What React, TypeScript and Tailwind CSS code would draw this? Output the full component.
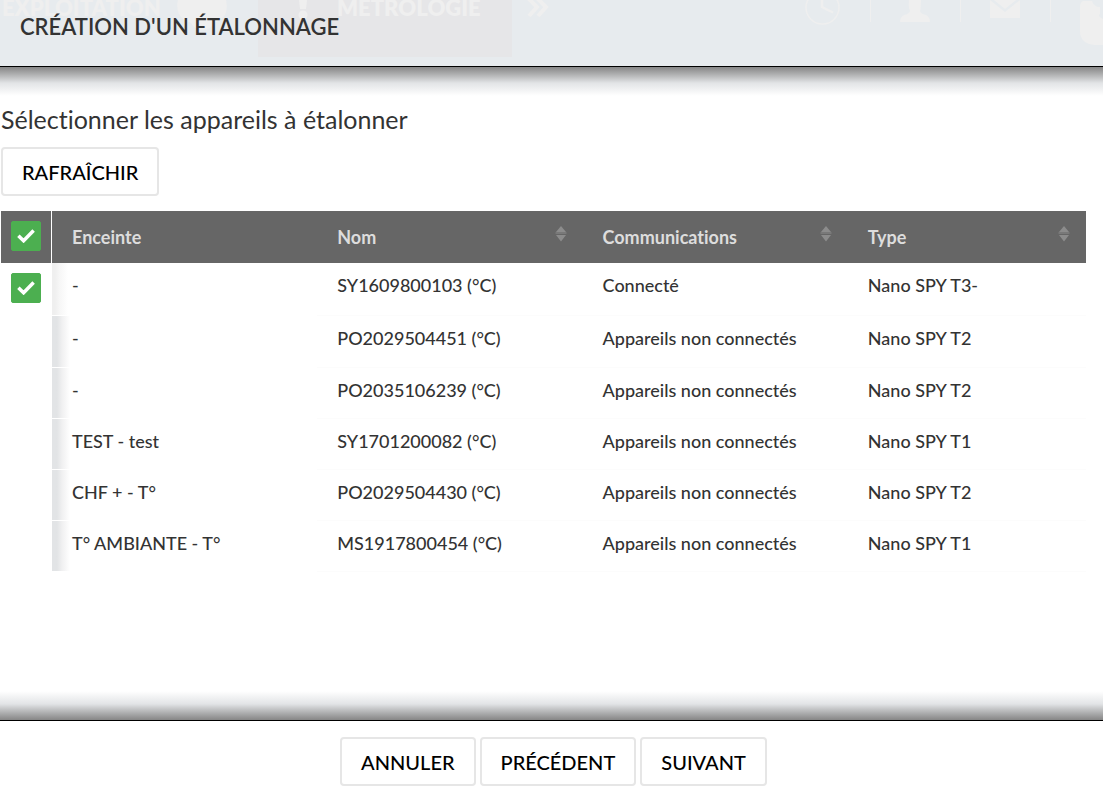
import React, { useState } from 'react';

interface Device {
  id: number;
  enclosure: string;
  name: string;
  status: string;
  type: string;
  connected: boolean;
}

const OFFLINE = 'Appareils non connectés';

const devices: Device[] = [
  { id: 1, enclosure: '-', name: 'SY1609800103 (°C)', status: 'Connecté', type: 'Nano SPY T3-', connected: true },
  { id: 2, enclosure: '-', name: 'PO2029504451 (°C)', status: OFFLINE, type: 'Nano SPY T2', connected: false },
  { id: 3, enclosure: '-', name: 'PO2035106239 (°C)', status: OFFLINE, type: 'Nano SPY T2', connected: false },
  { id: 4, enclosure: 'TEST - test', name: 'SY1701200082 (°C)', status: OFFLINE, type: 'Nano SPY T1', connected: false },
  { id: 5, enclosure: 'CHF + - T°', name: 'PO2029504430 (°C)', status: OFFLINE, type: 'Nano SPY T2', connected: false },
  { id: 6, enclosure: 'T° AMBIANTE - T°', name: 'MS1917800454 (°C)', status: OFFLINE, type: 'Nano SPY T1', connected: false },
];

interface CheckProps {
  label: string;
  checked: boolean;
  onChange: (checked: boolean) => void;
}

const Check: React.FC<CheckProps> = ({ label, checked, onChange }) => (
  <div className="mx-auto grid size-[30px] place-items-center">
    <input
      type="checkbox"
      aria-label={label}
      checked={checked}
      onChange={(e) => onChange(e.target.checked)}
      className="col-start-1 row-start-1 size-[30px] cursor-pointer appearance-none rounded-[2px] border border-[#4caf50] bg-white checked:bg-[#4caf50]"
    />
    {checked && (
      <svg viewBox="0 0 18 14" className="pointer-events-none col-start-1 row-start-1 h-[14px] w-[18px]" fill="none">
        <path d="M1.4 6.8 L6.6 11.8 L16.6 1.6" stroke="#fff" strokeWidth="3.5" />
      </svg>
    )}
  </div>
);

const Button: React.FC<{ children: React.ReactNode }> = ({ children }) => (
  <button
    type="button"
    className="h-[49px] rounded border-2 border-[#e6e6e6] bg-white px-[19px] text-xl font-medium text-black uppercase hover:bg-gray-50"
  >
    {children}
  </button>
);

const HeadCell: React.FC<{ title: string; sortable?: boolean }> = ({ title, sortable }) => (
  <th scope="col" className="h-[52px] pr-4 pl-5 text-left font-bold">
    <div className="flex items-center justify-between">
      {title}
      {sortable && (
        <button type="button" aria-label={`Trier par ${title}`} className="pb-1.5">
          <svg viewBox="0 0 12 16" className="h-4 w-3" fill="#8c8c8c">
            <path d="M6 0 L11 6 H1 Z M0.5 6.5 H11.5 V7.5 H0.5 Z M1 9 H11 L6 15.5 Z" />
          </svg>
        </button>
      )}
    </div>
  </th>
);

// Faded main menu showing through the dialog header
const MenuBackdrop = () => (
  <div aria-hidden="true" className="absolute inset-0 overflow-hidden text-[#efefef]">
    <div className="absolute top-0 left-[258px] h-[57px] w-[254px] bg-[#e6e6e8]" />
    <span className="absolute -top-2 left-[2px] text-[22px] leading-8 font-extrabold">EXPLOITATION</span>
    <svg className="absolute top-0 left-[177px]" width="50" height="32" fill="currentColor">
      <path d="M1 0 H49 Q51 8 48 15 Q44 20 37 23 A13 13 0 0 1 14 23 Q5 20 2 14 Q-1 7 1 0 Z" />
    </svg>
    <svg className="absolute top-0 left-[298px]" width="10" height="21" fill="currentColor">
      <path d="M1 0 H9 L8 9 H2 Z" />
      <circle cx="5" cy="15" r="4.5" />
    </svg>
    <span className="absolute -top-2 left-[337px] text-[22px] leading-8 font-extrabold">MÉTROLOGIE</span>
    <svg className="absolute top-0 left-[527px]" width="22" height="18" fill="none" stroke="currentColor" strokeWidth="4">
      <path d="M1 -2 L10 7 L2 16 M10 -2 L19 7 L11 16" />
    </svg>
    <svg className="absolute top-0 right-0" width="303" height="50" fill="currentColor">
      <circle cx="22.5" cy="7.5" r="16.5" fill="none" stroke="currentColor" strokeWidth="1.5" />
      <path d="M22 -3 V7 L33 12.5" fill="none" stroke="currentColor" strokeWidth="2.5" />
      <path d="M70 0 H71 V22 H70 Z M160 0 H161 V22 H160 Z M250 0 H251 V22 H250 Z" />
      <path d="M109 0 H121 Q121 8 120 11 Q121 14 126 15 Q130 17 130 22 H100 Q100 17 104 15 Q109 14 110 11 Q108 7 109 0 Z" />
      <path d="M190 0 L205 12 L220 0 V18 H190 Z" />
      <path d="M194 0 L205 9 L216 0 Z" />
      <path d="M283 1 H292 Q294 7 300 7 V14 Q297 16 303 19 V45 H295 Q280 44 280 31 V7 Q280 2 283 1 Z" />
    </svg>
  </div>
);

const App = () => {
  const [selected, setSelected] = useState<number[]>([1]);

  const selectable = devices.filter(d => d.connected);
  const allSelected = selectable.every(d => selected.includes(d.id));

  const toggle = (id: number, checked: boolean) => {
    setSelected(prev => (checked ? [...prev, id] : prev.filter(s => s !== id)));
  };

  return (
    <div className="flex min-h-screen flex-col bg-white font-[Lato,sans-serif] text-[#333] [font-variant-ligatures:none]">
      <header className="relative h-[67px] border-b border-black bg-[#e7ebee] px-5 pt-3">
        <MenuBackdrop />
        <h1 className="relative text-[22px] leading-[30px] font-semibold uppercase">Création d'un étalonnage</h1>
      </header>
      <div className="h-8 bg-linear-to-b from-[#868686] via-[#e2e4e6] via-50% to-white to-90%" />

      <main className="flex-1 pt-[3px] pr-[17px] pb-2 pl-px">
        <h2 className="mb-[11px] text-[25px] leading-[34px]">Sélectionner les appareils à étalonner</h2>
        <Button>Rafraîchir</Button>

        <table className="mt-[15px] w-full table-fixed border-separate border-spacing-0 text-lg leading-6 font-medium">
          <colgroup>
            <col className="w-[51px]" />
            <col className="w-[24.45%]" />
            <col className="w-[24.45%]" />
            <col className="w-[24.45%]" />
            <col />
          </colgroup>
          <thead>
            <tr className="bg-[#666] text-[#ddd]">
              <th scope="col" className="border-r border-white pt-2.5 align-top">
                <Check
                  label="Tout sélectionner"
                  checked={allSelected}
                  onChange={(checked) => setSelected(checked ? selectable.map(d => d.id) : [])}
                />
              </th>
              <HeadCell title="Enceinte" />
              <HeadCell title="Nom" sortable />
              <HeadCell title="Communications" sortable />
              <HeadCell title="Type" sortable />
            </tr>
          </thead>
          <tbody>
            {devices.map(device => (
              <tr key={device.id} className="h-[51px] align-top first:h-[53px] nth-2:h-[52px]">
                <td className="border-r border-white pt-2.5">
                  {device.connected && (
                    <Check
                      label={`Sélectionner ${device.name}`}
                      checked={selected.includes(device.id)}
                      onChange={(checked) => toggle(device.id, checked)}
                    />
                  )}
                </td>
                <td
                  className={`border-b border-white pt-2.5 pl-5 ${device.connected
                    ? 'bg-linear-to-r from-[#efefef] from-[3px] via-[#f7f7f7] via-[8px] to-white to-[16px]'
                    : 'bg-linear-to-r from-[#e2e4e6] from-[5px] via-[#f0f0f1] via-[10px] to-white to-[18px]'}`}
                >
                  {device.enclosure}
                </td>
                <td className="border-b border-[#fcfcfc] pt-2.5 pl-5">{device.name}</td>
                <td className="border-b border-[#fcfcfc] pt-2.5 pl-5">{device.status}</td>
                <td className="border-b border-[#fcfcfc] pt-2.5 pl-5">{device.type}</td>
              </tr>
            ))}
          </tbody>
        </table>
      </main>

      <div className="h-8 bg-linear-to-t from-[#868686] via-[#e2e4e6] via-50% to-white to-90%" />
      <footer className="flex justify-center gap-1 border-t border-black bg-white pt-4 pb-[11px] pl-1">
        <Button>Annuler</Button>
        <Button>Précédent</Button>
        <Button>Suivant</Button>
      </footer>
    </div>
  );
};

export default App;
